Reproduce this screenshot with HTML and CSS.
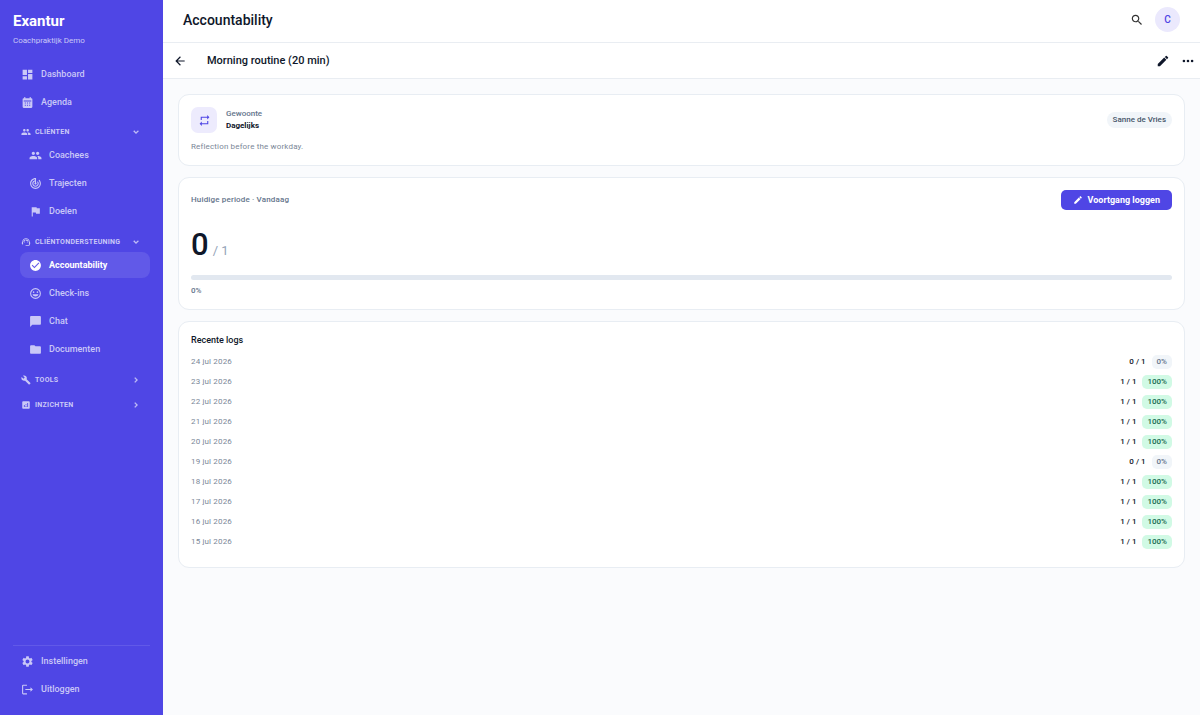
FILE: index.html
```html
<!DOCTYPE html>
<html lang="nl">
<head>
<meta charset="utf-8">
<meta name="viewport" content="width=device-width, initial-scale=1">
<title>Exantur – Accountability</title>
<link rel="stylesheet" href="styles.css">
</head>
<body>
<svg class="sprite" aria-hidden="true">
  <symbol id="dashboard" viewBox="0 0 24 24"><path d="M3 13h8V3H3v10zm0 8h8v-6H3v6zm10 0h8V11h-8v10zm0-18v6h8V3h-8z"/></symbol>
  <symbol id="calendar" viewBox="0 0 24 24"><path fill-rule="evenodd" d="M19 4h-1V2h-2v2H8V2H6v2H5a2 2 0 0 0-2 2v14a2 2 0 0 0 2 2h14a2 2 0 0 0 2-2V6a2 2 0 0 0-2-2zM5 8.500h14V10H5zM7 12h2v2H7zm4 0h2v2h-2zm4 0h2v2h-2zm-8 4h2v2H7zm4 0h2v2h-2zm4 0h2v2h-2z"/></symbol>
  <symbol id="people" viewBox="0 0 24 24"><path d="M16 11c1.660 0 2.990-1.340 2.990-3S17.660 5 16 5s-3 1.340-3 3 1.340 3 3 3zm-8 0c1.660 0 2.990-1.340 2.990-3S9.660 5 8 5 5 6.340 5 8s1.340 3 3 3zm0 2c-2.330 0-7 1.170-7 3.500V19h14v-2.500C15 14.170 10.330 13 8 13zm8 0c-.29 0-.62.02-.97.05 1.160.84 1.970 1.970 1.970 3.450V19h6v-2.500c0-2.330-4.670-3.500-7-3.500z"/></symbol>
  <symbol id="track" viewBox="0 0 24 24"><path d="M19.070 4.930l-1.410 1.410C19.100 7.790 20 9.790 20 12c0 4.420-3.580 8-8 8s-8-3.580-8-8c0-4.080 3.050-7.440 7-7.930v2.020C8.160 6.570 6 9.030 6 12c0 3.310 2.690 6 6 6s6-2.690 6-6c0-1.660-.67-3.160-1.760-4.240l-1.410 1.410C15.550 9.900 16 10.900 16 12c0 2.210-1.790 4-4 4s-4-1.790-4-4c0-1.860 1.280-3.410 3-3.860v2.140c-.6.35-1 .98-1 1.720 0 1.100.9 2 2 2s2-.9 2-2c0-.74-.4-1.380-1-1.720V2h-1C6.480 2 2 6.480 2 12s4.480 10 10 10 10-4.480 10-10c0-2.760-1.120-5.260-2.930-7.070z"/></symbol>
  <symbol id="flag" viewBox="0 0 24 24"><path d="M14.400 6L14 4H5v17h2v-7h5.600l.4 2h7V6z"/></symbol>
  <symbol id="support" viewBox="0 0 24 24"><path d="M21 12.220C21 6.730 16.740 3 12 3c-4.690 0-9 3.650-9 9.280-.6.34-1 .98-1 1.720v2c0 1.100.9 2 2 2h1v-6.100c0-3.870 3.130-7 7-7s7 3.130 7 7V19h-8v2h8c1.100 0 2-.9 2-2v-1.220c.59-.31 1-.92 1-1.640v-2.300c0-.7-.41-1.310-1-1.620z"/><circle cx="9" cy="13" r="1"/><circle cx="15" cy="13" r="1"/><path d="M18 11.030C17.520 8.180 15.040 6 12.050 6c-3.030 0-6.290 2.510-6.030 6.450 2.470-1.010 4.330-3.210 4.860-5.890 1.310 2.630 4 4.440 7.120 4.470z"/></symbol>
  <symbol id="check" viewBox="0 0 24 24"><path d="M12 2C6.480 2 2 6.480 2 12s4.480 10 10 10 10-4.480 10-10S17.520 2 12 2zm-2 15l-5-5 1.410-1.410L10 14.170l7.590-7.590L19 8l-9 9z"/></symbol>
  <symbol id="mood" viewBox="0 0 24 24"><path d="M12 2a10 10 0 1 0 0 20 10 10 0 0 0 0-20zm0 18a8 8 0 1 1 0-16 8 8 0 0 1 0 16zm3.500-9a1.500 1.500 0 1 0 0-3 1.500 1.500 0 0 0 0 3zm-7 0a1.500 1.500 0 1 0 0-3 1.500 1.500 0 0 0 0 3zM6.500 13.500C7.200 16 9.400 17.700 12 17.700s4.800-1.700 5.500-4.200z"/></symbol>
  <symbol id="chat" viewBox="0 0 24 24"><path d="M20 2H4c-1.100 0-2 .9-2 2v18l4-4h14c1.100 0 2-.9 2-2V4c0-1.100-.9-2-2-2z"/></symbol>
  <symbol id="folder" viewBox="0 0 24 24"><path d="M10 4H4c-1.100 0-1.990.9-1.990 2L2 18c0 1.100.9 2 2 2h16c1.100 0 2-.9 2-2V8c0-1.100-.9-2-2-2h-8l-2-2z"/></symbol>
  <symbol id="build" viewBox="0 0 24 24"><path d="M22.700 19l-9.100-9.100c.9-2.300.4-5-1.500-6.900-2-2-5-2.400-7.400-1.300L9 6 6 9 1.600 4.700C.4 7.100.9 10.100 2.900 12.100c1.900 1.900 4.600 2.400 6.900 1.500l9.100 9.100c.4.4 1 .4 1.400 0l2.300-2.300c.5-.4.5-1.100.1-1.400z"/></symbol>
  <symbol id="analytics" viewBox="0 0 24 24"><path d="M19 3H5c-1.100 0-2 .9-2 2v14c0 1.100.9 2 2 2h14c1.100 0 2-.9 2-2V5c0-1.100-.9-2-2-2zM9 17H7v-5h2v5zm4 0h-2v-3h2v3zm0-5h-2v-2h2v2zm4 5h-2V7h2v10z"/></symbol>
  <symbol id="settings" viewBox="0 0 24 24"><path d="M19.140 12.940c.04-.3.06-.61.06-.94s-.02-.64-.07-.94l2.030-1.580c.18-.14.23-.41.12-.61l-1.920-3.320c-.12-.22-.37-.29-.59-.22l-2.390.96c-.5-.38-1.030-.7-1.620-.94l-.36-2.540c-.04-.24-.24-.41-.48-.41h-3.840c-.24 0-.43.17-.47.41l-.36 2.540c-.59.24-1.130.57-1.620.94l-2.390-.96c-.22-.08-.47 0-.59.22L2.740 8.870c-.12.21-.08.47.12.61l2.030 1.580c-.05.3-.09.63-.09.94s.02.64.07.94l-2.030 1.580c-.18.14-.23.41-.12.61l1.920 3.320c.12.22.37.29.59.22l2.390-.96c.5.38 1.030.7 1.620.94l.36 2.540c.05.24.24.41.48.41h3.840c.24 0 .44-.17.47-.41l.36-2.540c.59-.24 1.130-.56 1.620-.94l2.390.96c.22.08.47 0 .59-.22l1.920-3.320c.12-.22.07-.47-.12-.61l-2.010-1.580zM12 15.600c-1.980 0-3.600-1.620-3.600-3.600s1.620-3.600 3.600-3.600 3.600 1.620 3.600 3.600-1.620 3.600-3.600 3.600z"/></symbol>
  <symbol id="logout" viewBox="0 0 24 24"><path d="M11 5V3H4a2 2 0 0 0-2 2v14a2 2 0 0 0 2 2h7v-2H4V5zm6.500 3v3H8v2h9.500v3l4.500-4z"/></symbol>
  <symbol id="down" viewBox="0 0 24 24"><path d="M7.410 8.590L12 13.170l4.590-4.580L18 10l-6 6-6-6z" stroke="currentColor"/></symbol>
  <symbol id="right" viewBox="0 0 24 24"><path d="M8.590 16.590L13.170 12 8.590 7.410 10 6l6 6-6 6z" stroke="currentColor"/></symbol>
  <symbol id="search" viewBox="0 0 24 24"><path d="M15.500 14h-.79l-.28-.27C15.410 12.590 16 11.110 16 9.500 16 5.910 13.090 3 9.500 3S3 5.910 3 9.500 5.910 16 9.500 16c1.610 0 3.090-.59 4.230-1.570l.27.28v.79l5 4.990L20.490 19l-4.990-5zm-6 0C7.010 14 5 11.990 5 9.500S7.010 5 9.500 5 14 7.010 14 9.500 11.990 14 9.500 14z"/></symbol>
  <symbol id="back" viewBox="0 0 24 24"><path d="M20 11H7.830l5.590-5.590L12 4l-8 8 8 8 1.410-1.410L7.830 13H20z"/></symbol>
  <symbol id="edit" viewBox="0 0 24 24"><path d="M3 17.250V21h3.750L17.810 9.940l-3.750-3.750L3 17.250zM20.710 7.040c.39-.39.39-1.020 0-1.410l-2.340-2.340a1 1 0 0 0-1.410 0l-1.830 1.830 3.750 3.750 1.830-1.830z"/></symbol>
  <symbol id="more" viewBox="0 0 24 24"><circle cx="5" cy="12" r="2.200"/><circle cx="12" cy="12" r="2.200"/><circle cx="19" cy="12" r="2.200"/></symbol>
  <symbol id="repeat" viewBox="0 0 24 24"><path d="M7 7h10v3l4-4-4-4v3H5v6h2V7zm10 10H7v-3l-4 4 4 4v-3h12v-6h-2v4z"/></symbol>
</svg>

<div class="app">
  <aside class="sidebar">
    <div class="brand">
      <div class="brand-name">Exantur</div>
      <div class="brand-sub">Coachpraktijk Demo</div>
    </div>
    <nav class="nav">
      <a class="nav-item" href="#"><svg class="icon"><use href="#dashboard"/></svg>Dashboard</a>
      <a class="nav-item" href="#"><svg class="icon"><use href="#calendar"/></svg>Agenda</a>

      <section class="group">
        <button class="group-head" type="button" aria-expanded="true"><svg class="icon-small"><use href="#people"/></svg><span class="group-label">Cliënten</span><svg class="icon-small"><use href="#down"/></svg></button>
        <div class="group-items">
          <a class="nav-item" href="#"><svg class="icon"><use href="#people"/></svg>Coachees</a>
          <a class="nav-item" href="#"><svg class="icon"><use href="#track"/></svg>Trajecten</a>
          <a class="nav-item" href="#"><svg class="icon"><use href="#flag"/></svg>Doelen</a>
        </div>
      </section>

      <section class="group">
        <button class="group-head" type="button" aria-expanded="true"><svg class="icon-small"><use href="#support"/></svg><span class="group-label">Cliëntondersteuning</span><svg class="icon-small"><use href="#down"/></svg></button>
        <div class="group-items">
          <a class="nav-item active" href="#" aria-current="page"><svg class="icon"><use href="#check"/></svg>Accountability</a>
          <a class="nav-item" href="#"><svg class="icon"><use href="#mood"/></svg>Check-ins</a>
          <a class="nav-item" href="#"><svg class="icon"><use href="#chat"/></svg>Chat</a>
          <a class="nav-item" href="#"><svg class="icon"><use href="#folder"/></svg>Documenten</a>
        </div>
      </section>

      <section class="group">
        <button class="group-head" type="button" aria-expanded="false"><svg class="icon-small"><use href="#build"/></svg><span class="group-label">Tools</span><svg class="icon-small"><use href="#right"/></svg></button>
      </section>
      <section class="group">
        <button class="group-head" type="button" aria-expanded="false"><svg class="icon-small"><use href="#analytics"/></svg><span class="group-label">Inzichten</span><svg class="icon-small"><use href="#right"/></svg></button>
      </section>
    </nav>
    <div class="nav-foot">
      <a class="nav-item" href="#"><svg class="icon"><use href="#settings"/></svg>Instellingen</a>
      <a class="nav-item" href="#"><svg class="icon"><use href="#logout"/></svg>Uitloggen</a>
    </div>
  </aside>

  <div class="main">
    <header class="topbar">
      <h1 class="page-title">Accountability</h1>
      <button class="icon-button search" type="button" aria-label="Zoeken"><svg class="icon-large"><use href="#search"/></svg></button>
      <button class="avatar" type="button">C</button>
    </header>
    <div class="subbar">
      <button class="icon-button" type="button" aria-label="Terug"><svg class="icon-large"><use href="#back"/></svg></button>
      <h2 class="sub-title">Morning routine (20 min)</h2>
      <button class="icon-button" type="button" aria-label="Bewerken"><svg class="icon-large"><use href="#edit"/></svg></button>
      <button class="icon-button" type="button" aria-label="Meer"><svg class="icon-large"><use href="#more"/></svg></button>
    </div>

    <main class="content">
      <section class="card">
        <div class="habit">
          <div class="habit-icon"><svg class="icon"><use href="#repeat"/></svg></div>
          <div class="habit-text">
            <div class="habit-kind">Gewoonte</div>
            <div class="habit-freq">Dagelijks</div>
          </div>
          <span class="person">Sanne de Vries</span>
        </div>
        <p class="description">Reflection before the workday.</p>
      </section>

      <section class="card">
        <div class="period">
          <span class="period-label">Huidige periode · Vandaag</span>
          <button class="primary" type="button"><svg class="icon-small"><use href="#edit"/></svg>Voortgang loggen</button>
        </div>
        <div class="score"><span class="score-value">0</span><span class="score-total">/ 1</span></div>
        <div class="bar" role="progressbar" aria-label="Voortgang" aria-valuenow="0" aria-valuemin="0" aria-valuemax="100"></div>
        <div class="bar-label">0%</div>
      </section>

      <section class="card">
        <h3 class="card-title">Recente logs</h3>
        <table class="logs">
          <tbody>
            <tr><td class="date">24 jul 2026</td><td class="result">0 / 1<span class="pct">0%</span></td></tr>
            <tr><td class="date">23 jul 2026</td><td class="result">1 / 1<span class="pct full">100%</span></td></tr>
            <tr><td class="date">22 jul 2026</td><td class="result">1 / 1<span class="pct full">100%</span></td></tr>
            <tr><td class="date">21 jul 2026</td><td class="result">1 / 1<span class="pct full">100%</span></td></tr>
            <tr><td class="date">20 jul 2026</td><td class="result">1 / 1<span class="pct full">100%</span></td></tr>
            <tr><td class="date">19 jul 2026</td><td class="result">0 / 1<span class="pct">0%</span></td></tr>
            <tr><td class="date">18 jul 2026</td><td class="result">1 / 1<span class="pct full">100%</span></td></tr>
            <tr><td class="date">17 jul 2026</td><td class="result">1 / 1<span class="pct full">100%</span></td></tr>
            <tr><td class="date">16 jul 2026</td><td class="result">1 / 1<span class="pct full">100%</span></td></tr>
            <tr><td class="date">15 jul 2026</td><td class="result">1 / 1<span class="pct full">100%</span></td></tr>
          </tbody>
        </table>
      </section>
    </main>
  </div>
</div>
</body>
</html>
```

FILE: styles.css
```css
* { box-sizing: border-box; }

body {
  margin: 0;
  font-family: Roboto, "Liberation Sans", sans-serif;
  font-size: 8px;
  line-height: 12px;
  color: #0f172a;
  background: #fafbfd;
}

h1, h2, h3, p { margin: 0; }

button {
  padding: 0;
  border: 0;
  background: none;
  font: inherit;
  color: inherit;
  cursor: pointer;
}

a { color: inherit; text-decoration: none; }

svg { display: block; flex: none; fill: currentColor; }

.sprite { position: absolute; width: 0; height: 0; }
.icon { width: 13px; height: 13px; }
.icon-small { width: 10px; height: 10px; }
.icon-large { width: 14px; height: 14px; }

.app { display: flex; min-height: 100vh; }

/* Sidebar */
.sidebar {
  display: flex;
  flex-direction: column;
  flex: none;
  width: 163px;
  padding: 12px 13px 11px;
  background: #4f46e5;
  color: #cac8f7;
}

.brand { padding-bottom: 14px; }
.brand-name { font-size: 15px; line-height: 19px; font-weight: 700; color: #fff; }
.brand-sub { margin-top: 4px; }

.nav { display: flex; flex: 1; flex-direction: column; }

.nav-item {
  display: flex;
  align-items: center;
  gap: 7px;
  height: 26px;
  margin-bottom: 2px;
  padding: 0 8px;
  border-radius: 8px;
  font-size: 9px;
  font-weight: 500;
}
.group .nav-item { padding: 0 9px; }
.nav-item.active { background: #6159e8; color: #fff; font-weight: 700; }

.group { margin-top: 5px; }
.group-head {
  display: flex;
  align-items: center;
  gap: 4px;
  width: 100%;
  height: 20px;
  padding: 0 9px 0 8px;
  font-size: 7px;
  font-weight: 700;
  text-align: left;
  text-transform: uppercase;
  letter-spacing: 0.04em;
}
.group-label { flex: 1; }
.group-items { padding: 0 0 1px 7px; }

.nav-foot { padding-top: 2px; border-top: 1px solid #6159e8; }

/* Header bars */
.main { flex: 1; min-width: 0; }

.topbar, .subbar {
  display: flex;
  align-items: center;
  background: #fff;
  border-bottom: 1px solid #e9edf2;
}
.topbar { height: 43px; padding: 0 20px 3px; }
.subbar { height: 36px; padding: 0 5px 0 10px; gap: 11px; }

.page-title { flex: 1; font-size: 14px; line-height: 18px; font-weight: 500; }
.sub-title { flex: 1; margin-left: 9px; font-size: 11px; line-height: 16px; font-weight: 500; }

.icon-button { display: flex; padding: 0; }
.search { margin-right: 11px; color: #333; }

.avatar {
  width: 25px;
  height: 25px;
  border-radius: 50%;
  background: #ebe9fd;
  color: #4f46e5;
  font-size: 10px;
  font-weight: 500;
}

/* Content */
.content {
  display: flex;
  flex-direction: column;
  gap: 11px;
  padding: 15px;
}

.card {
  padding: 12px;
  background: #fff;
  border: 1px solid #e8edf3;
  border-radius: 11px;
}

.habit { display: flex; align-items: center; gap: 9px; }
.habit-icon {
  display: grid;
  place-items: center;
  width: 26px;
  height: 26px;
  border-radius: 7px;
  background: #edebfd;
  color: #4f46e5;
}
.habit-text { flex: 1; }
.habit-kind { color: #64748b; font-weight: 500; }
.habit-freq { font-weight: 700; }
.person {
  padding: 2px 6px;
  border-radius: 8px;
  background: #f1f5f9;
  color: #475569;
  font-weight: 500;
}
.description { margin-top: 8px; color: #7b8798; letter-spacing: 0.02em; }

.period { display: flex; align-items: center; justify-content: space-between; }
.period-label { color: #64748b; font-weight: 500; letter-spacing: 0.02em; }
.primary {
  display: flex;
  align-items: center;
  justify-content: center;
  gap: 5px;
  height: 20px;
  padding: 0 12px;
  border-radius: 5px;
  background: #4f46e5;
  color: #fff;
  font-size: 9px;
  font-weight: 700;
}

.score { display: flex; align-items: baseline; gap: 4px; margin-top: 17px; }
.score-value { font-size: 31px; line-height: 36px; font-weight: 500; }
.score-total { font-size: 13px; color: #94a3b8; }

.bar { height: 5px; margin-top: 12px; border-radius: 3px; background: #e2e8f0; }
.bar-label { margin-top: 5px; color: #64748b; font-weight: 500; }

.card-title { font-size: 9px; font-weight: 500; }

.logs { width: 100%; margin: 6px 0 3px; border-collapse: collapse; }
.logs td { height: 20px; padding: 0; }
.date { color: #7b8798; letter-spacing: 0.02em; }
.result { text-align: right; font-weight: 500; }
.pct {
  display: inline-block;
  margin-left: 6px;
  padding: 1px 5px;
  border-radius: 5px;
  background: #f1f5f9;
  color: #64748b;
}
.pct.full { background: #d1fae5; color: #166a50; }
```
